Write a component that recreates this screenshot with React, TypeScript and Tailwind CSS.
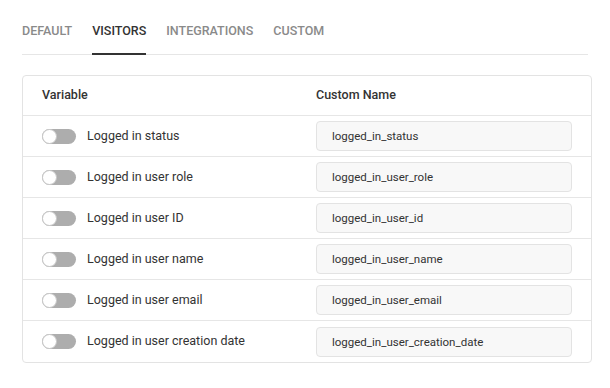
import React, { useState } from 'react';

const tabs = ['DEFAULT', 'VISITORS', 'INTEGRATIONS', 'CUSTOM'];

const rows = [
  { label: 'Logged in status', name: 'logged_in_status' },
  { label: 'Logged in user role', name: 'logged_in_user_role' },
  { label: 'Logged in user ID', name: 'logged_in_user_id' },
  { label: 'Logged in user name', name: 'logged_in_user_name' },
  { label: 'Logged in user email', name: 'logged_in_user_email' },
  { label: 'Logged in user creation date', name: 'logged_in_user_creation_date' },
];

const Toggle: React.FC<{ on: boolean; onChange: () => void }> = ({ on, onChange }) => (
  <button
    onClick={onChange}
    className={`relative w-[34px] h-[15px] rounded-full shrink-0 ${on ? 'bg-[#8fb4e8]' : 'bg-[#adadad]'}`}
  >
    <span
      className={`absolute top-0 w-[15px] h-[15px] rounded-full bg-white border border-[#c8c8c8] ${
        on ? 'left-[19px]' : 'left-0'
      }`}
    ></span>
  </button>
);

export default function App() {
  const [active, setActive] = useState('VISITORS');
  const [enabled, setEnabled] = useState<boolean[]>(rows.map(() => false));

  return (
    <div className="w-[610px] h-[388px] bg-white font-['Roboto',sans-serif] px-[22px] text-[#333]">
      {/* Tabs */}
      <div className="flex gap-[20px] border-b border-[#e6e6e6]">
        {tabs.map((t) => (
          <button
            key={t}
            onClick={() => setActive(t)}
            className={`h-[55px] pt-[9px] text-[12.5px] font-medium border-b-2 -mb-px ${
              active === t ? 'text-[#333] border-[#333]' : 'text-[#8a8a8a] border-transparent'
            }`}
          >
            {t}
          </button>
        ))}
      </div>

      {/* Table */}
      <div className="mt-[20px] w-[570px] border border-[#e3e3e3] rounded-[4px]">
        <div className="flex items-center h-[40px] border-b border-[#e6e6e6] text-[12.5px] font-medium text-[#333]">
          <div className="w-[293px] pl-[19px]">Variable</div>
          <div>Custom Name</div>
        </div>
        {rows.map((r, i) => (
          <div
            key={r.name}
            className={`flex items-center h-[41px] ${i < rows.length - 1 ? 'border-b border-[#e6e6e6]' : ''}`}
          >
            <div className="w-[293px] pl-[19px] flex items-center gap-[11px]">
              <Toggle
                on={enabled[i]}
                onChange={() => setEnabled(enabled.map((v, j) => (j === i ? !v : v)))}
              />
              <span className="text-[12.5px] text-[#333]">{r.label}</span>
            </div>
            <input
              defaultValue={r.name}
              className="w-[256px] h-[30px] px-[15px] rounded-[4px] border border-[#e3e3e3] bg-[#f8f8f8] text-[11.5px] text-[#333] outline-none"
            />
          </div>
        ))}
      </div>
    </div>
  );
}
